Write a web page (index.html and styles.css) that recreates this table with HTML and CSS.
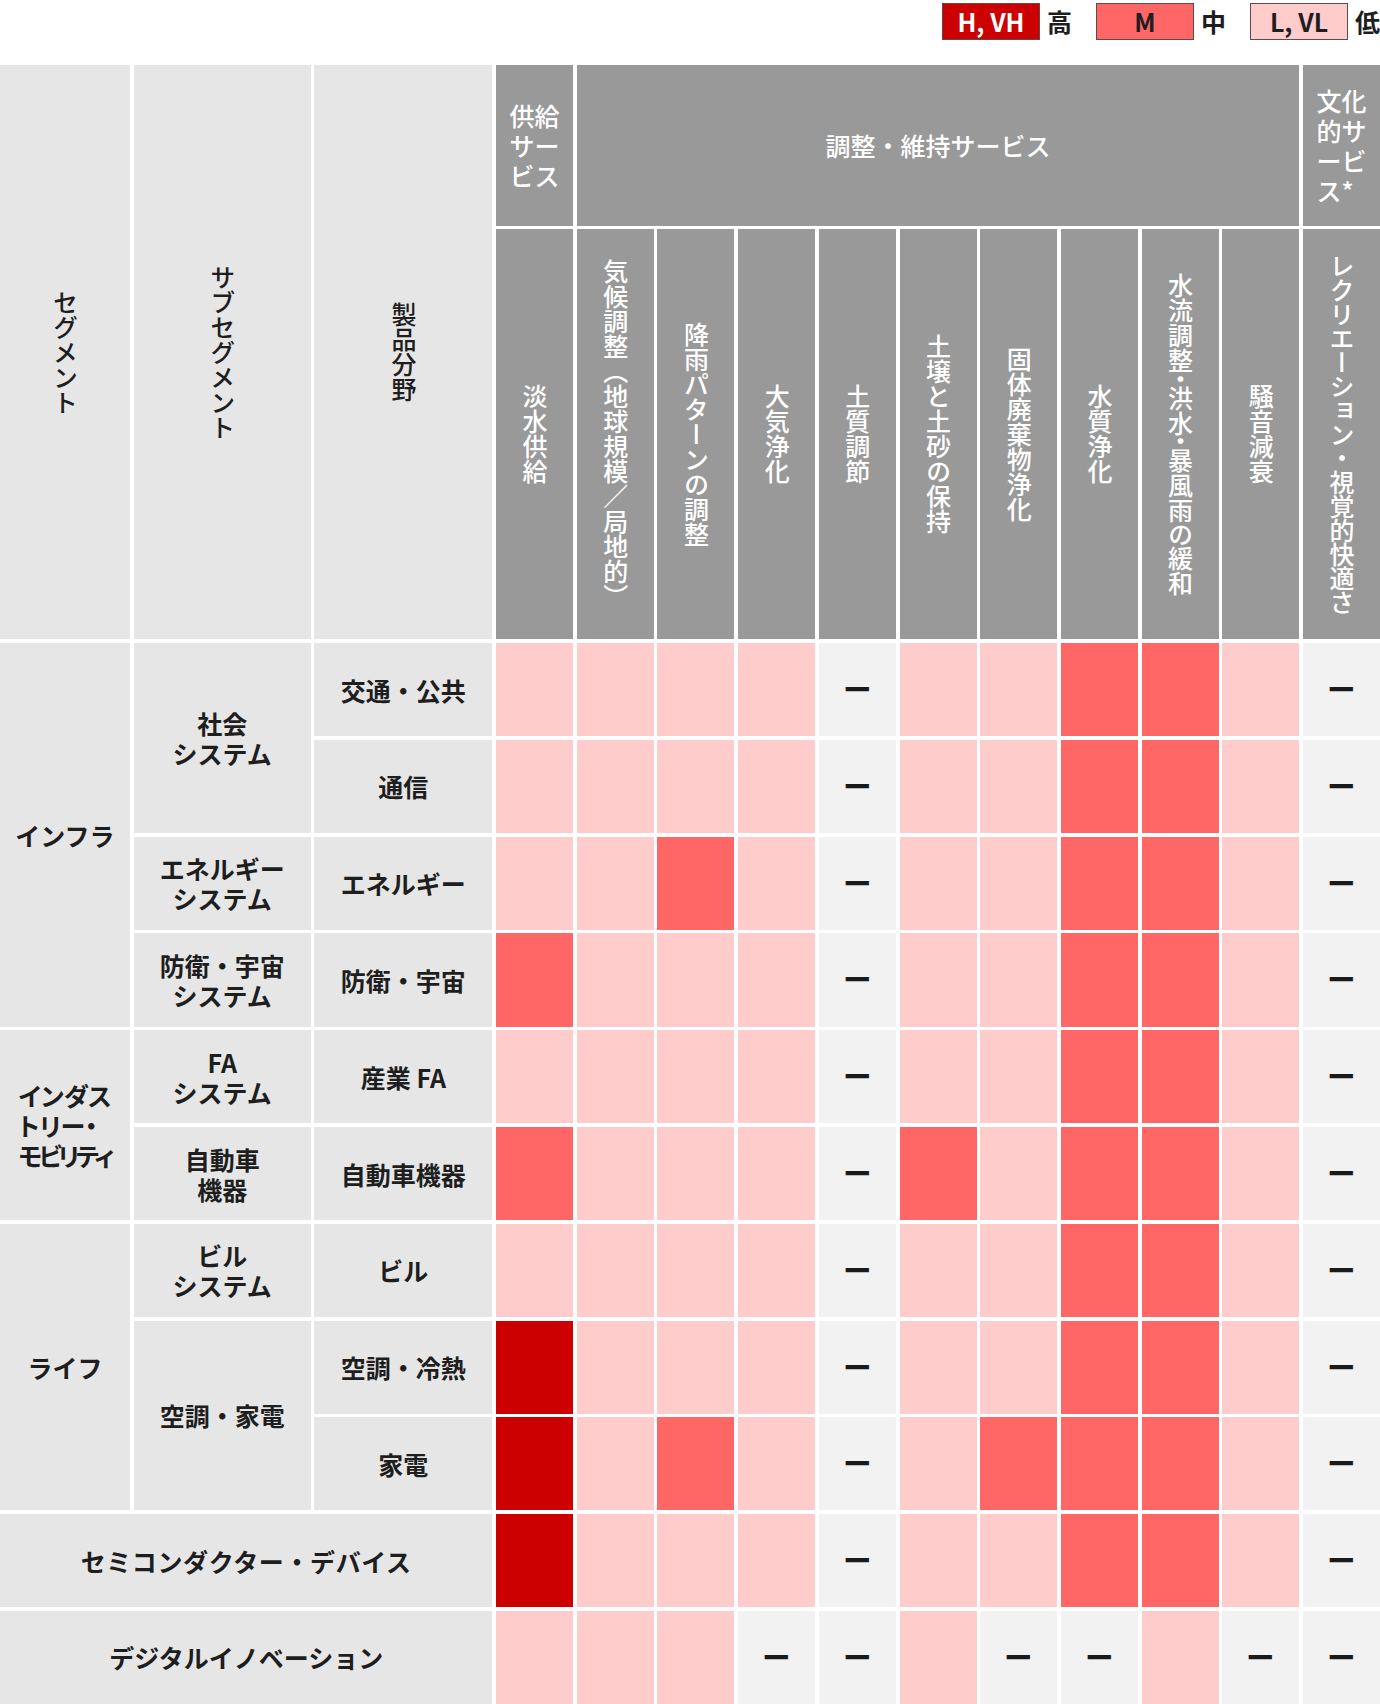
FILE: index.html
```html
<!DOCTYPE html>
<html lang="ja">
<head>
<meta charset="utf-8">
<title>生態系サービスへの依存度マトリクス</title>
<link rel="stylesheet" href="styles.css">
</head>
<body>
<div class="legend">
  <div class="legend-item"><span class="swatch sw-h">H, VH</span><span class="legend-label">高</span></div>
  <div class="legend-item"><span class="swatch sw-m">M</span><span class="legend-label">中</span></div>
  <div class="legend-item"><span class="swatch sw-l">L, VL</span><span class="legend-label">低</span></div>
</div>

<div class="matrix">
  <!-- header row 1 -->
  <div class="cell corner r2"><span class="vt">セグメント</span></div>
  <div class="cell corner r2"><span class="vt">サブセグメント</span></div>
  <div class="cell corner r2"><span class="vt">製品分野</span></div>
  <div class="cell hd"><span class="blk">供給<br>サー<br>ビス</span></div>
  <div class="cell hd c9">調整・維持サービス</div>
  <div class="cell hd"><span class="blk">文化<br>的サ<br>ービ<br>ス*</span></div>

  <!-- header row 2 -->
  <div class="cell hd"><span class="vt">淡水供給</span></div>
  <div class="cell hd"><span class="vt">気候調整（地球規模／局地的）</span></div>
  <div class="cell hd"><span class="vt">降雨パターンの調整</span></div>
  <div class="cell hd"><span class="vt">大気浄化</span></div>
  <div class="cell hd"><span class="vt">土質調節</span></div>
  <div class="cell hd"><span class="vt">土壌と土砂の保持</span></div>
  <div class="cell hd"><span class="vt">固体廃棄物浄化</span></div>
  <div class="cell hd"><span class="vt">水質浄化</span></div>
  <div class="cell hd"><span class="vt vprop">水流調整・洪水・暴風雨の緩和</span></div>
  <div class="cell hd"><span class="vt">騒音減衰</span></div>
  <div class="cell hd"><span class="vt snug">レクリエーション・視覚的快適さ</span></div>

  <!-- 交通・公共 -->
  <div class="cell lab r4">インフラ</div>
  <div class="cell lab r2 lift">社会<br>システム</div>
  <div class="cell lab">交通・公共</div>
  <div class="cell L"></div><div class="cell L"></div><div class="cell L"></div><div class="cell L"></div><div class="cell N"><span class="dash">—</span></div><div class="cell L"></div><div class="cell L"></div><div class="cell M"></div><div class="cell M"></div><div class="cell L"></div><div class="cell N"><span class="dash">—</span></div>

  <!-- 通信 -->
  <div class="cell lab">通信</div>
  <div class="cell L"></div><div class="cell L"></div><div class="cell L"></div><div class="cell L"></div><div class="cell N"><span class="dash">—</span></div><div class="cell L"></div><div class="cell L"></div><div class="cell M"></div><div class="cell M"></div><div class="cell L"></div><div class="cell N"><span class="dash">—</span></div>

  <!-- エネルギー -->
  <div class="cell lab">エネルギー<br>システム</div>
  <div class="cell lab">エネルギー</div>
  <div class="cell L"></div><div class="cell L"></div><div class="cell M"></div><div class="cell L"></div><div class="cell N"><span class="dash">—</span></div><div class="cell L"></div><div class="cell L"></div><div class="cell M"></div><div class="cell M"></div><div class="cell L"></div><div class="cell N"><span class="dash">—</span></div>

  <!-- 防衛・宇宙 -->
  <div class="cell lab">防衛・宇宙<br>システム</div>
  <div class="cell lab">防衛・宇宙</div>
  <div class="cell M"></div><div class="cell L"></div><div class="cell L"></div><div class="cell L"></div><div class="cell N"><span class="dash">—</span></div><div class="cell L"></div><div class="cell L"></div><div class="cell M"></div><div class="cell M"></div><div class="cell L"></div><div class="cell N"><span class="dash">—</span></div>

  <!-- 産業 FA -->
  <div class="cell lab r2"><span class="blk prop">インダス<br>トリー・<br><span class="tight">モビリティ</span></span></div>
  <div class="cell lab">FA<br>システム</div>
  <div class="cell lab">産業 FA</div>
  <div class="cell L"></div><div class="cell L"></div><div class="cell L"></div><div class="cell L"></div><div class="cell N"><span class="dash">—</span></div><div class="cell L"></div><div class="cell L"></div><div class="cell M"></div><div class="cell M"></div><div class="cell L"></div><div class="cell N"><span class="dash">—</span></div>

  <!-- 自動車機器 -->
  <div class="cell lab">自動車<br>機器</div>
  <div class="cell lab">自動車機器</div>
  <div class="cell M"></div><div class="cell L"></div><div class="cell L"></div><div class="cell L"></div><div class="cell N"><span class="dash">—</span></div><div class="cell M"></div><div class="cell L"></div><div class="cell M"></div><div class="cell M"></div><div class="cell L"></div><div class="cell N"><span class="dash">—</span></div>

  <!-- ビル -->
  <div class="cell lab r3">ライフ</div>
  <div class="cell lab">ビル<br>システム</div>
  <div class="cell lab">ビル</div>
  <div class="cell L"></div><div class="cell L"></div><div class="cell L"></div><div class="cell L"></div><div class="cell N"><span class="dash">—</span></div><div class="cell L"></div><div class="cell L"></div><div class="cell M"></div><div class="cell M"></div><div class="cell L"></div><div class="cell N"><span class="dash">—</span></div>

  <!-- 空調・冷熱 -->
  <div class="cell lab r2">空調・家電</div>
  <div class="cell lab">空調・冷熱</div>
  <div class="cell H"></div><div class="cell L"></div><div class="cell L"></div><div class="cell L"></div><div class="cell N"><span class="dash">—</span></div><div class="cell L"></div><div class="cell L"></div><div class="cell M"></div><div class="cell M"></div><div class="cell L"></div><div class="cell N"><span class="dash">—</span></div>

  <!-- 家電 -->
  <div class="cell lab">家電</div>
  <div class="cell H"></div><div class="cell L"></div><div class="cell M"></div><div class="cell L"></div><div class="cell N"><span class="dash">—</span></div><div class="cell L"></div><div class="cell M"></div><div class="cell M"></div><div class="cell M"></div><div class="cell L"></div><div class="cell N"><span class="dash">—</span></div>

  <!-- セミコンダクター・デバイス -->
  <div class="cell lab c3 spread">セミコンダクター・デバイス</div>
  <div class="cell H"></div><div class="cell L"></div><div class="cell L"></div><div class="cell L"></div><div class="cell N"><span class="dash">—</span></div><div class="cell L"></div><div class="cell L"></div><div class="cell M"></div><div class="cell M"></div><div class="cell L"></div><div class="cell N"><span class="dash">—</span></div>

  <!-- デジタルイノベーション -->
  <div class="cell lab c3">デジタルイノベーション</div>
  <div class="cell L"></div><div class="cell L"></div><div class="cell L"></div><div class="cell N"><span class="dash">—</span></div><div class="cell N"><span class="dash">—</span></div><div class="cell L"></div><div class="cell N"><span class="dash">—</span></div><div class="cell N"><span class="dash">—</span></div><div class="cell L"></div><div class="cell N"><span class="dash">—</span></div><div class="cell N"><span class="dash">—</span></div>
</div>
</body>
</html>
```

FILE: styles.css
```css
* {
  box-sizing: border-box;
}

html,
body {
  margin: 0;
  padding: 0;
  background: #ffffff;
}

body {
  width: 1380px;
  font-family: "Noto Sans CJK JP", "Noto Sans", sans-serif;
  font-size: 25px;
  line-height: 1.2;
  color: #1e1e1e;
}

/* legend */
.legend {
  display: flex;
  justify-content: flex-end;
  align-items: flex-start;
  height: 39px;
  padding-top: 3px;
  margin-bottom: 25.7px;
}

.legend-item {
  display: flex;
  align-items: center;
  margin-left: 24px;
}

.legend-item:first-child {
  margin-left: 0;
}

.swatch {
  width: 98px;
  height: 37px;
  border: 1px solid #5e4a4a;
  display: flex;
  align-items: center;
  justify-content: center;
  font-weight: 700;
  font-size: 25px;
  line-height: 1;
}

.sw-h {
  background: #cc0000;
  color: #ffffff;
}

.sw-m {
  background: #ff6666;
}

.sw-l {
  background: #ffcccc;
}

.legend-label {
  margin-left: 7px;
  width: 25px;
  font-weight: 700;
  line-height: 1;
}

/* matrix */
.matrix {
  display: grid;
  grid-template-columns: 130px 177px 178px repeat(11, 1fr);
  grid-template-rows: 161px 410px repeat(11, 93.1px);
  gap: 3.7px;
}

.cell {
  display: flex;
  align-items: center;
  justify-content: center;
  text-align: center;
}

.corner {
  background: #e6e6e6;
  font-weight: 500;
}

.hd {
  background: #999999;
  color: #ffffff;
  font-weight: 500;
}

.lab {
  background: #e6e6e6;
  font-weight: 700;
}

.r2 {
  grid-row: span 2;
}

.r3 {
  grid-row: span 3;
}

.r4 {
  grid-row: span 4;
}

.c3 {
  grid-column: span 3;
}

.c9 {
  grid-column: span 9;
}

.vt {
  writing-mode: vertical-rl;
  line-height: 1;
}

.vprop {
  font-feature-settings: "vpal" 1;
}

.snug {
  letter-spacing: -1px;
}

.blk {
  display: inline-block;
  text-align: left;
}

.prop {
  font-feature-settings: "palt" 1;
}

.tight {
  letter-spacing: -3.5px;
}

.lift {
  align-items: flex-start;
  padding-top: 65px;
}

.spread {
  letter-spacing: 0.6px;
}

.L {
  background: #ffcccc;
}

.M {
  background: #ff6666;
}

.H {
  background: #cc0000;
}

.N {
  background: #f2f2f2;
  color: #1a1a1a;
}

.dash {
  display: inline-block;
  font-weight: 700;
  line-height: 1;
  transform: translateY(-6px) scale(1.15, 1.8);
}
```
